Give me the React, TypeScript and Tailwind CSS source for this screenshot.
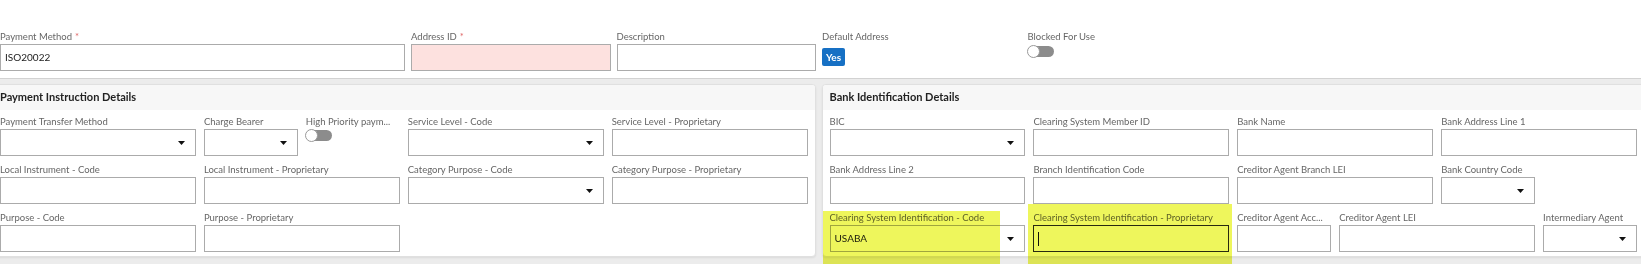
import React from "react";

// Address form: header fields + two detail panels (payment instruction / bank identification).

type FieldProps = {
  label: string;
  span?: string;
  required?: boolean;
  kind?: "input" | "select" | "toggle";
  value?: string;
  invalid?: boolean;
  focused?: boolean;
};

const Caret = () => (
  <svg width="7" height="4" viewBox="0 0 7 4" className="absolute right-[10px] top-1/2 -translate-y-1/2">
    <path d="M0 0h7L3.5 4z" fill="#111" />
  </svg>
);

const Toggle = ({ className = "" }: { className?: string }) => (
  <div className={"relative h-[11px] w-[26px] rounded-full bg-[#8c8c8c] " + className}>
    <div className="absolute -left-px -top-px h-[13px] w-[13px] rounded-full border border-[#9a9a9a] bg-white" />
  </div>
);

const Field = ({ label, span = "col-span-2", required, kind = "input", value, invalid, focused }: FieldProps) => (
  <div className={span + " min-w-0"}>
    <div className="h-[15px] truncate text-[9.5px] leading-[15px] text-[#666]">
      {label}
      {required && <span className="ml-[3px] text-[#e06a6a]">*</span>}
    </div>
    {kind === "toggle" ? (
      <Toggle className="mt-px" />
    ) : (
      <div
        className={
          "relative flex h-[27px] items-center px-[4px] text-[10px] text-[#222] " +
          (focused
            ? "border border-[#2a2a2a] "
            : "border border-[#ababab] ") +
          (invalid ? "bg-[#fde1df]" : "bg-white")
        }
      >
        {value}
        {focused && <span className="h-[14px] w-px bg-[#111]" />}
        {kind === "select" && <Caret />}
      </div>
    )}
  </div>
);

const Panel = ({ title, children }: { title: string; children: React.ReactNode }) => (
  <div className="overflow-hidden rounded-[4px] border border-[#e0e0e0] bg-white shadow-[0_1px_2px_rgba(0,0,0,0.08)]">
    <div className="flex h-[25px] items-center bg-[#f7f7f7] px-[7px] text-[11px] font-bold text-[#222]">
      {title}
    </div>
    <div className="grid grid-cols-[repeat(8,minmax(0,1fr))] gap-x-2 gap-y-[6px] px-[7px] pb-[4px] pt-[4px]">
      {children}
    </div>
  </div>
);

export default function App() {
  return (
    <div className="relative h-[264px] w-[1641px] overflow-hidden bg-[#ececec] font-['Lato',sans-serif]">
      <div className="grid grid-cols-[repeat(16,minmax(0,1fr))] gap-x-[6px] border-b border-[#d2d2d2] bg-white pb-[7px] pr-[3px] pt-[29px]">
        <Field label="Payment Method" required span="col-span-4" value="ISO20022" />
        <Field label="Address ID" required invalid />
        <Field label="Description" />
        <div className="col-span-2">
          <div className="h-[15px] text-[9.5px] leading-[15px] text-[#666]">Default Address</div>
          <div className="mt-[4px] flex h-[18px] w-[23px] items-center justify-center rounded-[2px] bg-[#1670c4] text-[10px] font-bold text-white">
            Yes
          </div>
        </div>
        <div className="col-span-2">
          <div className="h-[15px] text-[9.5px] leading-[15px] text-[#666]">Blocked For Use</div>
          <Toggle className="mt-[2px]" />
        </div>
      </div>

      <div className="-ml-2 grid w-[1653px] grid-cols-2 gap-x-[6px] pt-[5px]">
        <Panel title="Payment Instruction Details">
          <Field label="Payment Transfer Method" kind="select" />
          <Field label="Charge Bearer" span="col-span-1" kind="select" />
          <Field label="High Priority paym..." span="col-span-1" kind="toggle" />
          <Field label="Service Level - Code" kind="select" />
          <Field label="Service Level - Proprietary" />
          <Field label="Local Instrument - Code" />
          <Field label="Local Instrument - Proprietary" />
          <Field label="Category Purpose - Code" kind="select" />
          <Field label="Category Purpose - Proprietary" />
          <Field label="Purpose - Code" />
          <Field label="Purpose - Proprietary" />
        </Panel>
        <Panel title="Bank Identification Details">
          <Field label="BIC" kind="select" />
          <Field label="Clearing System Member ID" />
          <Field label="Bank Name" />
          <Field label="Bank Address Line 1" />
          <Field label="Bank Address Line 2" />
          <Field label="Branch Identification Code" />
          <Field label="Creditor Agent Branch LEI" />
          <Field label="Bank Country Code" span="col-span-1" kind="select" />
          <div className="col-span-1" />
          <Field label="Clearing System Identification - Code" kind="select" value="USABA" />
          <Field label="Clearing System Identification - Proprietary" focused />
          <Field label="Creditor Agent Acc..." span="col-span-1" />
          <Field label="Creditor Agent LEI" />
          <Field label="Intermediary Agent" span="col-span-1" kind="select" />
        </Panel>
      </div>

      {/* highlighter marks drawn over the screenshot */}
      <div className="pointer-events-none absolute left-[823px] top-[211px] h-[60px] w-[177px] bg-[#eef65c] mix-blend-multiply" />
      <div className="pointer-events-none absolute left-[1028px] top-[204px] h-[70px] w-[204px] bg-[#eef65c] mix-blend-multiply" />
    </div>
  );
}
